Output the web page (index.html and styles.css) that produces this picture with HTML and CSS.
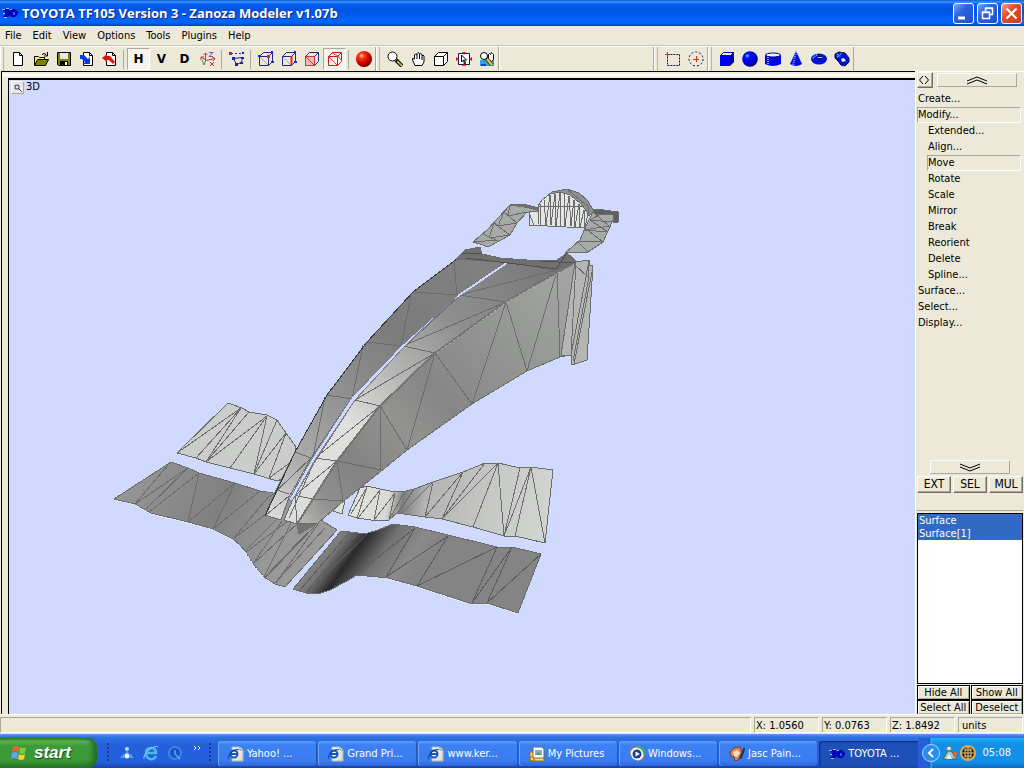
FILE: index.html
```html
<!DOCTYPE html>
<html lang="en">

<head>
    <meta charset="UTF-8">
    <meta name="viewport" content="width=device-width, initial-scale=1.0">
    <title>TOYOTA TF105 Version 3 - Zanoza Modeler v1.07b</title>
    <link rel="stylesheet" href="styles.css">
</head>

<body>
    <!-- Shared icons -->
    <svg class="defs" width="0" height="0" aria-hidden="true">
        <defs>
            <linearGradient id="iePage" x1="0" y1="0" x2="1" y2="1">
                <stop offset="0" stop-color="#fff" />
                <stop offset="1" stop-color="#d8d8c8" />
            </linearGradient>
            <radialGradient id="redBall" cx=".35" cy=".3" r=".75">
                <stop offset="0" stop-color="#fff0a0" />
                <stop offset=".2" stop-color="#f84020" />
                <stop offset=".6" stop-color="#d80000" />
                <stop offset="1" stop-color="#600000" />
            </radialGradient>
            <radialGradient id="blueBall" cx=".33" cy=".3" r=".75">
                <stop offset="0" stop-color="#60f0ff" />
                <stop offset=".2" stop-color="#0010f8" />
                <stop offset=".7" stop-color="#0000d0" />
                <stop offset="1" stop-color="#000050" />
            </radialGradient>
            <symbol id="app" viewBox="0 0 16 16">
                <path d="M1 4h5l2 2 1-2h4l3 3v2l-3 3H9l-1-2-2 2H2l-1-1 3-1-2-2 2-1-3-1z" fill="#0000b8" />
                <path d="M0 4.500h3M4 3.500h3M1 8.500h2M2 12.500h3M8 4.500h2" stroke="#8cc0ff" fill="none" />
                <path d="M11 7h2v3h-2z" fill="#2860ff" />
            </symbol>
            <symbol id="ie" viewBox="0 0 16 16">
                <path d="M4 1h8l3 3v11H4z" fill="url(#iePage)" stroke="#b8b8a8" />
                <path d="M12 1v3h3" fill="#fff" stroke="#88887c" />
                <circle cx="6" cy="8" r="3.500" fill="#fff" stroke="#1258c0" stroke-width="2" />
                <path d="M3 8h7" stroke="#1258c0" stroke-width="2" />
                <path d="M1 13Q-1 10 4 6T11 4" fill="none" stroke="#103c90" />
            </symbol>
            <symbol id="cube" viewBox="0 0 16 16">
                <path d="M1.500 5.500h9v9h-9zM1.500 5.500l4-4h9l-4 4M14.500 1.500v9l-4 4" fill="none" stroke="currentColor" />
            </symbol>
        </defs>
    </svg>

    <!-- Title bar -->
    <header class="titlebar">
        <svg class="icon16"><use href="#app" /></svg>
        <h1>TOYOTA TF105 Version 3 - Zanoza Modeler v1.07b</h1>
        <div class="window-buttons">
            <button aria-label="Minimize"><svg viewBox="0 0 19 19"><path d="M4 14h7" stroke="#fff" stroke-width="3" /></svg></button>
            <button aria-label="Restore"><svg viewBox="0 0 19 19"><path d="M4.500 8.500h7v6h-7zM4 8h8M7.500 7V4.500h7v6H12M7 4h8" fill="none" stroke="#fff" stroke-width="1.500" /></svg></button>
            <button class="close" aria-label="Close"><svg viewBox="0 0 19 19"><path d="M4.500 4.500l10 10M14.500 4.500l-10 10" stroke="#fff" stroke-width="2.200" /></svg></button>
        </div>
    </header>

    <!-- Menu -->
    <nav class="menubar">
        <button>File</button>
        <button>Edit</button>
        <button>View</button>
        <button>Options</button>
        <button>Tools</button>
        <button>Plugins</button>
        <button>Help</button>
    </nav>

    <!-- Toolbars -->
    <div class="toolbars">
        <div class="toolbar">
            <button aria-label="New"><svg viewBox="0 0 16 16"><path d="M3.500 1.500h6l3 3v10h-9zM9.500 1.500v3h3" fill="#fff" stroke="#000" /></svg></button>
            <button aria-label="Open"><svg viewBox="0 0 16 16"><path d="M1.500 14V5.500h4l1 1h5V9" fill="#f4f080" stroke="#000" /><path d="M1.500 14.500l3-6h11l-3 6z" fill="#808000" stroke="#000" /><path d="M9 3.500q2-2 4 0l1 1M14.500 1v4H11" fill="none" stroke="#000" /></svg></button>
            <button aria-label="Save"><svg viewBox="0 0 16 16"><path d="M1.500 1.500h13v13h-12l-1-1z" fill="#808000" stroke="#000" /><path d="M4 2h8v6H4z" fill="#e8e8e0" /><path d="M4 10h8v5H4z" fill="#000" /><path d="M9 11h2v3H9z" fill="#fff" /></svg></button>
            <button aria-label="Import"><svg viewBox="0 0 16 16"><path d="M4.500 1.500h6l3 3v10h-9zM10.500 1.500v3h3" fill="#fff" stroke="#000" /><path d="M1 4h4l4 4 2-2v7H4l2-2-3-3H1z" fill="#0838e8" /></svg></button>
            <button aria-label="Export"><svg viewBox="0 0 16 16"><path d="M4.500 1.500h6l3 3v10h-9zM10.500 1.500v3h3" fill="#fff" stroke="#000" /><path d="M0 7l5-4v2h3l5 6-2 2-4-4H5v2z" fill="#e01010" /></svg></button>
            <span class="sep"></span>
            <button class="letter pressed">H</button>
            <button class="letter">V</button>
            <button class="letter">D</button>
            <button aria-label="Axes"><svg viewBox="0 0 16 16"><path d="M5.500 10V2M3.500 4l2-2 2 2M6 9.500l9-2M12 6l3 1.500-2 2.500M6 9l-5-3M1 9V6h3" fill="none" stroke="#d83030" /><path d="M9 1.500h4l-4 4h4" fill="none" stroke="#8050b0" /><path d="M2 9l2 5 2-5" fill="none" stroke="#38a038" /><path d="M10 11l4 4M14 11l-4 4" stroke="#d83030" /></svg></button>
            <span class="sep"></span>
            <button aria-label="Vertices"><svg viewBox="0 0 16 16"><path d="M2 2.500h12" stroke="#2030d0" stroke-dasharray="2 2" /><path d="M4.500 7.500l3 6 5-2 1-5z" fill="none" stroke="#303060" /><path d="M0 1h3v3H0z" fill="#e01818" /><path d="M13 1h2v2h-2zM12 6h3v2h-3zM6 12h3v3H6zM11 11h3v2h-3zM3 6h3v3H3z" fill="#1820c8" /></svg></button>
            <span class="sep"></span>
            <button aria-label="Vertex level"><svg viewBox="0 0 16 16" color="#202880"><path d="M2 6l8 8" stroke="#aaa" /><use href="#cube" /><path d="M9 4h3v3H9z" fill="#e02020" /><path d="M13 0h2v3h-2zM13 10h3v2h-3zM0 4h2v2H0z" fill="#1828d8" /></svg></button>
            <button aria-label="Edge level"><svg viewBox="0 0 16 16" color="#202880"><path d="M2 6l8 8" stroke="#aaa" /><use href="#cube" /><path d="M10.500 5v9" stroke="#e02020" stroke-width="2" /><path d="M13 0h2v3h-2zM13 10h3v2h-3z" fill="#1828d8" /></svg></button>
            <button aria-label="Face level"><svg viewBox="0 0 16 16" color="#202880"><path d="M1.500 5.500h9v9h-9z" fill="#f0b8b8" /><use href="#cube" /><path d="M1.500 5.500h9v9h-9zM2 6l8 8" fill="none" stroke="#d83030" /></svg></button>
            <button class="pressed" aria-label="Object level"><svg viewBox="0 0 16 16" color="#d81818"><use href="#cube" /><path d="M2 6l8 8M5 2l6 3M11 5l4 5" fill="none" stroke="#e04040" /></svg></button>
            <span class="sep"></span>
            <button aria-label="Material editor"><svg viewBox="0 0 16 16"><circle cx="8" cy="8" r="8" fill="url(#redBall)" /></svg></button>
        </div>
        <div class="toolbar">
            <button aria-label="Zoom"><svg viewBox="0 0 16 16"><path d="M9 9l6 6" stroke="#000" stroke-width="4" /><path d="M10 10l5 5" stroke="#c8b030" stroke-width="2" /><circle cx="5.500" cy="5.500" r="4.500" fill="#fff" stroke="#000" /></svg></button>
            <button aria-label="Pan"><svg viewBox="0 0 16 16"><path d="M5 14.500L2.500 9V7.500L4.500 8V4l1-1 1.500 1V2.500l1-1 1.500 1v1l1-1 1.500 1V5l1-1 1 1v6l-2 3.500zM7 4v4M9.500 3v5M12 5v4" fill="#fff" stroke="#000" /></svg></button>
            <button aria-label="Rotate view"><svg viewBox="0 0 16 16" color="#000"><path d="M1.500 5.500l4-4h9v9l-4 4h-9z" fill="#fff" /><use href="#cube" /></svg></button>
            <button aria-label="Fit view"><svg viewBox="0 0 16 16"><path d="M2.500 2.500h11v11h-11z" fill="#fff" stroke="#181850" /><path d="M6 1h4L8 4zM6 15h4l-2-3zM0 6v4l3-2zM16 6v4l-3-2z" fill="#e01818" /><path d="M5.500 4v7l2-2 1 4 1-1-1-3h2z" fill="#fff" stroke="#000" /></svg></button>
            <button aria-label="View options"><svg viewBox="0 0 16 16"><path d="M1 9h14v6H1z" fill="#30a0e8" /><path d="M2 13h5v2H2z" fill="#1040c0" /><path d="M9.500 8V3.500l1-1 1 1 1-2 1 1 1 1v5l-2 2z" fill="#fff" stroke="#000" /><path d="M7 7l6 7" stroke="#504010" stroke-width="4" /><path d="M8 8l5 6" stroke="#e8d040" stroke-width="2" /><circle cx="5" cy="5" r="3.500" fill="#fff" stroke="#000" /></svg></button>
        </div>
        <div class="toolbar filler"></div>
        <div class="toolbar">
            <button aria-label="Select rectangle"><svg viewBox="0 0 16 16"><path d="M2.500 3.500h12v11h-12z" fill="none" stroke="#101060" stroke-dasharray="2 1" /><path d="M0 3.500h5M2.500 1v5" stroke="#e02020" /></svg></button>
            <button aria-label="Select circle"><svg viewBox="0 0 16 16"><circle cx="8" cy="8" r="7" fill="none" stroke="#101060" stroke-dasharray="2 2" /><path d="M5 8.500h6M8.500 5v6" stroke="#e03010" /></svg></button>
        </div>
        <div class="toolbar">
            <button aria-label="Box"><svg viewBox="0 0 16 16"><path d="M1 5l4-4h10v10l-4 4H1z" fill="#0000b0" /><path d="M1 5h10v10H1z" fill="#0000f0" /><path d="M1.500 4.500l3-3h10l-3 3z" fill="#e8f4ff" stroke="#0000b0" /></svg></button>
            <button aria-label="Sphere"><svg viewBox="0 0 16 16"><circle cx="8" cy="8" r="7.800" fill="url(#blueBall)" /></svg></button>
            <button aria-label="Cylinder"><svg viewBox="0 0 16 16"><path d="M0 4v9q8 4 16 0V4z" fill="#0008e0" /><path d="M3 6v7" stroke="#58b8ff" stroke-width="2" stroke-dasharray="1 1" /><ellipse cx="8" cy="4" rx="7.500" ry="2" fill="#e8f8ff" stroke="#000080" /></svg></button>
            <button aria-label="Cone"><svg viewBox="0 0 16 16"><path d="M8 0l6 13q-6 4-12 0z" fill="#0008e0" /><path d="M8 1L5 14" stroke="#50b0ff" stroke-width="2" stroke-dasharray="1 1" /></svg></button>
            <button aria-label="Torus"><svg viewBox="0 0 16 16"><ellipse cx="8" cy="8" rx="8" ry="5.500" fill="#0010d8" /><ellipse cx="9" cy="6.500" rx="3" ry="1" fill="#d8f0ff" stroke="#000070" /><path d="M2 7q2-3 5-3" fill="none" stroke="#50c0ff" stroke-width="2" stroke-dasharray="1 1" /></svg></button>
            <button aria-label="Tube"><svg viewBox="0 0 16 16"><path d="M1 3l4-2 6 1 4 5v4l-4 4-4-1-3-4-3-3z" fill="#0010c8" stroke="#000070" /><path d="M7 8l3-1 2 3-4 1z" fill="#d8f0ff" /><path d="M3 6l5-4M3 3l3 3" stroke="#50b0ff" stroke-width="2" stroke-dasharray="1 1" /></svg></button>
        </div>
    </div>

    <!-- Work area -->
    <main class="workspace">
        <section class="viewport-frame">
            <div class="viewport">
                <div class="viewport-label">
                    <button aria-label="Maximize view"><svg viewBox="0 0 12 12"><path d="M3.500 3.500h4v4h-4zM7.500 7.500l3 3" fill="none" stroke="#202090" /></svg></button>
                    <span>3D</span>
                </div>
                <svg class="scene" viewBox="9 80 906 634" preserveAspectRatio="xMinYMin slice" role="img" aria-label="Car model">
                    <defs>
                        <linearGradient id="wingLeft" gradientUnits="userSpaceOnUse" x1="130" y1="470" x2="320" y2="570">
                            <stop offset="0" stop-color="#969696" />
                            <stop offset=".45" stop-color="#808080" />
                            <stop offset=".75" stop-color="#979797" />
                            <stop offset="1" stop-color="#9c9c9c" />
                        </linearGradient>
                        <linearGradient id="wingRight" gradientUnits="userSpaceOnUse" x1="318" y1="545" x2="395" y2="600">
                            <stop offset="0" stop-color="#8c8c8c" />
                            <stop offset=".18" stop-color="#777" />
                            <stop offset=".36" stop-color="#2a2a2a" />
                            <stop offset=".6" stop-color="#727272" />
                            <stop offset=".85" stop-color="#8a8a8a" />
                            <stop offset="1" stop-color="#848484" />
                        </linearGradient>
                        <linearGradient id="flapRight" gradientUnits="userSpaceOnUse" x1="350" y1="490" x2="545" y2="530">
                            <stop offset="0" stop-color="#e4e4e0" />
                            <stop offset=".2" stop-color="#d8d8d4" />
                            <stop offset=".27" stop-color="#7e7e7c" />
                            <stop offset=".38" stop-color="#b4b4b2" />
                            <stop offset=".7" stop-color="#c6c8c6" />
                            <stop offset="1" stop-color="#d2d4d2" />
                        </linearGradient>
                        <linearGradient id="noseLeft" gradientUnits="userSpaceOnUse" x1="480" y1="250" x2="275" y2="520">
                            <stop offset="0" stop-color="#808080" />
                            <stop offset=".35" stop-color="#7c7c7c" />
                            <stop offset=".6" stop-color="#929292" />
                            <stop offset=".82" stop-color="#acacaa" />
                            <stop offset="1" stop-color="#dcdcda" />
                        </linearGradient>
                        <linearGradient id="noseTop" gradientUnits="userSpaceOnUse" x1="550" y1="265" x2="290" y2="520">
                            <stop offset="0" stop-color="#787878" />
                            <stop offset=".3" stop-color="#8f8f8f" />
                            <stop offset=".52" stop-color="#b8b8b6" />
                            <stop offset=".7" stop-color="#e0e0de" />
                            <stop offset="1" stop-color="#dcdcda" />
                        </linearGradient>
                        <linearGradient id="noseSide" gradientUnits="userSpaceOnUse" x1="570" y1="290" x2="305" y2="520">
                            <stop offset="0" stop-color="#a2a4a2" />
                            <stop offset=".25" stop-color="#939593" />
                            <stop offset=".48" stop-color="#868686" />
                            <stop offset=".62" stop-color="#929290" />
                            <stop offset=".8" stop-color="#828282" />
                            <stop offset=".92" stop-color="#909090" />
                            <stop offset="1" stop-color="#b0b0ae" />
                        </linearGradient>
                    </defs>
                    <g stroke="#6c6c6c" stroke-linejoin="round">
                        <!-- Front wing, left flap -->
                        <path fill="#cbcdcb" d="M228 403L242 408 249 412 267 415 277 420 286 433 296 447 292 475 277 481 254 474 230 468 206 462 196 458 177 453Z" />
                        <path fill="none" d="M241 408L177 453M241 408L196 458M241 408L206 462M249 412L206 462M267 416L206 462M267 416L230 468M267 416L254 474M277 420L254 474M286 433L254 474M286 433L269 478M294 460L269 478" />
                        <!-- Front wing, left plane -->
                        <path fill="url(#wingLeft)" d="M171 462L188 468 199 473 235 483 260 491 280 494 337 530 285 587 275 584 264 577 253 564 246 552 240 545 233 539 213 529 188 522 151 513 135 504 114 499Z" />
                        <path fill="none" d="M168 465L135 504M188 468L135 504M188 468L145 510M199 473L149 512M199 473L188 522M235 483L188 522M235 483L213 529M260 491L213 529M270 495L233 539M265 515L233 539M277 519L246 550M288 521L246 552M282 521L253 564M297 524L253 564M292 521L264 577M308 532L265 577M315 526L266 577M325 528L275 583M318 524L276 583" />
                        <!-- Front wing, right flap -->
                        <path fill="#dededb" d="M333 511L342 514 345 500 352 492Z" />
                        <path fill="url(#flapRight)" d="M360 488L367 486 380 489 395 492 406 491 414 489 433 482 463 472 485 463 498 463 520 468 531 467 553 470 545 543 515 536 504 536 473 527 442 519 425 517 397 513 389 520 371 520 357 518 348 515Z" />
                        <path fill="none" d="M367 487L351 514M367 487L357 518M380 490L358 518M380 490L374 520M395 493L374 520M395 493L389 520M405 491L389 520M414 489L398 513M433 482L402 513M433 482L425 517M463 472L425 517M463 472L442 519M485 463L442 519M498 463L442 519M498 463L473 527M498 463L504 536M520 468L504 536M531 467L504 536M531 467L515 536M531 467L545 543" />
                        <!-- Front wing, right plane -->
                        <path fill="url(#wingRight)" d="M341 531L358 533 368 533 378 530 393 524 415 527 448 535 497 547 512 547 541 554 518 613 487 603 472 604 417 586 388 578 357 575 345 582 330 590 318 594 306 593 293 589Z" />
                        <path fill="none" stroke="#5c5c5c" d="M350 532L300 590M358 533L306 592M368 533L308 592M415 528L357 574M415 528L386 577M448 536L386 577M448 536L417 586M497 547L417 586M497 547L472 603M512 547L472 603M512 547L487 603M541 554L487 603" />
                        <path fill="none" stroke="#e4eaff" stroke-dasharray="2 1" d="M114 500L135 505 151 514 188 523 213 530 233 540M246 553L253 565 264 578 275 585M388 579L417 587 472 605 487 604 518 614" />
                        <!-- Nose, side wall -->
                        <path fill="url(#noseSide)" d="M575 263L506 302 435 353 380 406 337 461 313 499 297 524 318 523 340 504 380 472 407 450 472 404 527 371 560 357 570 355Z" />
                        <path fill="none" d="M557 271L560 357M557 271L527 371M506 302L527 371M506 302L472 404M435 353L472 404M435 353L407 450M380 406L407 450M380 406L381 470M337 461L381 470M337 461L343 500M313 499L343 501M575 263L561 355" />
                        <!-- Nose, left half -->
                        <path fill="url(#noseLeft)" d="M457 259L508 261 458 295 401 346 352 397 310 460 289 497 281 520 265 515 277 488 295 452 327 395 367 342 413 292Z" />
                        <path fill="none" d="M413 292L458 295M367 342L401 346M327 395L352 399M295 452L311 458M277 490L289 494M454 262L457 295M411 295L401 346M363 345L352 399M325 397L313 457M311 458L270 497M289 496L266 515" />
                        <!-- Nose, right half -->
                        <path fill="url(#noseTop)" d="M509 261L548 262 575 263 506 302 435 353 380 406 337 461 313 499 297 524 284 520 293 499 316 460 355 400 404 347 459 296Z" />
                        <path fill="none" d="M459 295L506 302M403 346L435 353M355 400L380 406M315 458L337 461M293 495L313 499M503 260L557 271M557 270L459 295M506 302L403 346M435 353L355 400M380 406L315 458M337 461L293 497M316 458L289 518M295 496L297 524" />
                        <path fill="none" stroke="#d0daff" stroke-width="2" d="M508 262L458 296" />
                        <path fill="#d0daff" stroke="#7c8090" d="M458 295L401 346 352 397 311 460 289 500 292 501 315 460 355 400 404 347Z" />
                        <path fill="none" stroke="#747472" stroke-width="2" d="M575 262L507 301 435 353 380 406 337 461 313 499 297 524" />
                        <path fill="none" stroke="#aaa" stroke-dasharray="2 3" d="M560 272L507 302 437 353" />
                        <path fill="none" stroke="#383838" d="M457 259L413 292 367 342 327 395 295 452 265 516" />
                        <path fill="#747474" d="M297 524L318 523 299 534Z" />
                        <!-- Side deflector -->
                        <path fill="#b4b6b4" d="M575 262L589 260 589 265 593 266 587 360 572 365 571 355 561 356Z" />
                        <path fill="none" d="M576 262L571 355M589 261L571 355M593 267L574 364M589 277L573 361M575 265L588 277M588 261V277" />
                        <!-- Cockpit rim -->
                        <path fill="#707070" d="M456 259L465 250 480 247 482 254 500 258 540 261 557 260 567 253 576 261 557 270 530 264Z" />
                        <path fill="none" stroke="#505050" d="M462 253L482 254M466 258L557 269M566 254L557 268M540 261L575 263" />
                        <!-- Mirror arms -->
                        <path fill="#a8aaa8" d="M473 242L487 230 510 205 522 205 538 209 537 213 527 212 517 223 510 235 488 247 480 244Z" />
                        <path fill="none" d="M504 212L517 223M494 223L510 235M483 234L498 241M510 205L508 216 527 212M504 212L498 226 517 223M494 223L489 238 510 235M473 242L498 240" />
                        <path fill="#707070" d="M510 205L523 204 539 208 538 210 524 207Z" />
                        <path fill="#a8aaa8" d="M593 212L617 213 612 222 603 242 588 252 565 253 580 240 585 228Z" />
                        <path fill="none" d="M590 220L612 222M584 230L608 232M577 241L603 242M593 212L609 226 584 230M585 228L603 242 577 241 588 252M603 213L590 220 608 232" />
                        <path fill="#606060" d="M590 211L597 209 618 212 618 222 613 223 613 215 596 214Z" />
                        <!-- Air intake -->
                        <path fill="#909090" d="M545 198L552 192 567 189 579 193 588 201 594 212 588 216 578 204 568 194Z" />
                        <path fill="#e4e6e3" d="M529 211L538 212 538 206 542 200 550 194 560 192 570 195 580 203 588 213 585 228 529 225Z" />
                        <path fill="none" d="M538 206L584 207M529 213L534 225M538 209V224M540 204L540 225M544 200L546 225 550 195 551 225 555 194 556 226 560 193 560 226M564 193L565 226 569 196 571 226 574 200 575 227 579 204 580 227 584 210 585 228M567 189L580 200 589 207 588 214" />
                    </g>
                </svg>
            </div>
        </section>

        <!-- Command panel -->
        <aside class="panel">
            <div class="panel-top">
                <button class="raised swap" aria-label="Swap side"><svg viewBox="0 0 12 12"><path d="M5 2L1.500 6 5 10M7 2l3.500 4L7 10" fill="none" stroke="#000" /></svg></button>
                <button class="scroll" aria-label="Scroll up"><svg viewBox="0 0 22 9"><path d="M1 5l10-4 10 4M1 8l10-4 10 4" fill="none" stroke="#000" /></svg></button>
            </div>
            <ul class="commands">
                <li><button>Create...</button></li>
                <li><button class="open">Modify...</button>
                    <ul>
                        <li><button>Extended...</button></li>
                        <li><button>Align...</button></li>
                        <li><button class="open">Move</button></li>
                        <li><button>Rotate</button></li>
                        <li><button>Scale</button></li>
                        <li><button>Mirror</button></li>
                        <li><button>Break</button></li>
                        <li><button>Reorient</button></li>
                        <li><button>Delete</button></li>
                        <li><button>Spline...</button></li>
                    </ul>
                </li>
                <li><button>Surface...</button></li>
                <li><button>Select...</button></li>
                <li><button>Display...</button></li>
            </ul>
            <button class="scroll down" aria-label="Scroll down"><svg viewBox="0 0 22 9"><path d="M1 1l10 4 10-4M1 4l10 4 10-4" fill="none" stroke="#000" /></svg></button>
            <div class="modes">
                <button class="raised">EXT</button>
                <button class="raised">SEL</button>
                <button class="raised">MUL</button>
            </div>
            <div class="objects">
                <select multiple aria-label="Objects">
                    <option selected>Surface</option>
                    <option selected>Surface[1]</option>
                </select>
                <div class="object-buttons">
                    <button>Hide All</button>
                    <button>Show All</button>
                    <button>Select All</button>
                    <button>Deselect</button>
                </div>
            </div>
        </aside>
    </main>

    <!-- Status bar -->
    <footer class="statusbar">
        <span class="message"></span>
        <span>X: 1.0560</span>
        <span>Y: 0.0763</span>
        <span>Z: 1.8492</span>
        <span class="units">units</span>
    </footer>

    <!-- Windows taskbar -->
    <div class="taskbar">
        <button class="start">
            <svg viewBox="0 0 18 18"><path d="M3 3q3-2 6 0L8 8Q5 6 2 8z" fill="#f06030" /><path d="M10 3q3 2 6 0l-1 6q-3 2-6 0z" fill="#80c840" /><path d="M2 9q3-2 6 0l-1 6q-3-2-6 0z" fill="#68a0f8" /><path d="M9 10q3 2 6 0l-1 5q-3 2-6 0z" fill="#f8d030" /></svg>
            start
        </button>
        <div class="quick">
            <span class="grip"></span>
            <button aria-label="Messenger"><svg viewBox="0 0 16 16"><circle cx="8" cy="4" r="2" fill="#b8e0f8" /><path d="M8 5l3 6H5zM5 8l-4 5h4M11 8l4 5h-4" fill="#50a0e0" /><circle cx="8" cy="11" r="2.500" fill="#e8f8ff" /></svg></button>
            <button aria-label="Internet Explorer"><svg viewBox="0 0 16 16"><path d="M13 11q-2 4-6 3t-4-6 5-5 5 5H4" fill="none" stroke="#50b8f0" stroke-width="2.500" /><path d="M1 14Q0 10 6 5t9-3" fill="none" stroke="#80d0f8" /></svg></button>
            <button aria-label="QuickTime"><svg viewBox="0 0 16 16"><circle cx="8" cy="8" r="6" fill="#1850c8" stroke="#3c88e0" stroke-width="2" /><path d="M8 5v4l5 5" fill="none" stroke="#58a8f0" stroke-width="1.500" /></svg></button>
            <button class="more" aria-label="More"><svg viewBox="0 0 8 6"><path d="M1 1l2 2-2 2M5 1l2 2-2 2" fill="none" stroke="#fff" /></svg></button>
            <span class="grip"></span>
        </div>
        <div class="tasks">
            <button><svg class="icon16"><use href="#ie" /></svg>Yahoo! ...</button>
            <button><svg class="icon16"><use href="#ie" /></svg>Grand Pri...</button>
            <button><svg class="icon16"><use href="#ie" /></svg>www.ker...</button>
            <button><svg class="icon16" viewBox="0 0 16 16"><path d="M1 6h4v9H1zM1 11h14v4H1z" fill="#f8d860" stroke="#a07010" /><path d="M4 1h9l2 2v9H4z" fill="#fff" stroke="#806850" /><path d="M6 4h7v5H6z" fill="#78b0e8" /><path d="M6 9l3-3 4 3z" fill="#60a050" /></svg>My Pictures</button>
            <button><svg class="icon16" viewBox="0 0 16 16"><circle cx="8" cy="8" r="7" fill="#fff" stroke="#e87830" /><path d="M8 1a7 7 0 0 1 7 7" stroke="#50b050" stroke-width="2" fill="none" /><path d="M1 8a7 7 0 0 0 7 7" stroke="#4080e0" stroke-width="2" fill="none" /><circle cx="8" cy="8" r="4.500" fill="#1c3c90" /><path d="M6.500 5.500v5L11 8z" fill="#fff" /></svg>Windows...</button>
            <button><svg class="icon16" viewBox="0 0 16 16"><path d="M1 6l4-4 6-1 2 5-4 8-3 1-1-4-3-1z" fill="#e08850" stroke="#803818" /><path d="M4 6l4-2 3 3-3 4-3-1z" fill="#f8e0c0" /><path d="M15.500 2l-4 11" stroke="#203060" stroke-width="2" /></svg>Jasc Pain...</button>
            <button class="current"><svg class="icon16"><use href="#app" /></svg>TOYOTA ...</button>
        </div>
        <div class="tray">
            <button class="chevron" aria-label="Show hidden icons"><svg viewBox="0 0 18 18"><circle cx="9" cy="9" r="8.500" fill="#2a8cf0" stroke="#a8d8ff" /><path d="M11 5L7 9l4 4" fill="none" stroke="#fff" stroke-width="2" /></svg></button>
            <svg class="icon16" viewBox="0 0 16 16"><circle cx="7" cy="3.500" r="2.500" fill="#d8e4d8" stroke="#607070" /><path d="M1 14l3-5 2-3h3l3 4 3 4z" fill="#a8c8c0" stroke="#406068" /><path d="M4 14l3-5 3 5z" fill="#e8f4e8" /><path d="M12 7h3l-1 5h-3z" fill="#e86820" /></svg>
            <svg class="icon16" viewBox="0 0 16 16"><circle cx="8" cy="8" r="7" fill="#181818" stroke="#e0a850" stroke-width="2" /><path d="M2 8h12M8 2v12M4 5h8M4 11h8" stroke="#f0c070" /><ellipse cx="8" cy="8" rx="3" ry="6" fill="none" stroke="#f0c070" /></svg>
            <time>05:08</time>
        </div>
    </div>
</body>

</html>
```
FILE: styles.css
```css
/* General styling */
* {
    box-sizing: border-box;
}

body {
    margin: 0;
    height: 100vh;
    display: flex;
    flex-direction: column;
    overflow: hidden;
    background-color: #ece9d8;
    color: #000;
    font-family: "DejaVu Sans Condensed", "Liberation Sans", sans-serif;
    font-size: 11px;
    line-height: 16px;
}

button {
    margin: 0;
    padding: 0;
    border: none;
    background: none;
    color: inherit;
    font: inherit;
    white-space: nowrap;
}

ul {
    list-style: none;
    margin: 0;
    padding: 0;
}

svg {
    display: block;
    flex: none;
}

.defs {
    position: absolute;
}

.icon16 {
    width: 16px;
    height: 16px;
}

/* Title bar */
.titlebar {
    flex: none;
    height: 26px;
    display: flex;
    align-items: center;
    gap: 4px;
    padding: 0 2px;
    background: linear-gradient(#0a56d8 0, #3d95ff 2px, #0660f0 4px, #0054e0 9px, #0058ec 14px, #0066ff 20px, #0060f8 23px, #0040c0 26px);
}

.titlebar h1 {
    flex: 1;
    margin: 0;
    color: #fff;
    font-family: "Open Sans", "Noto Sans", sans-serif;
    font-size: 13px;
    font-weight: bold;
    white-space: nowrap;
    text-shadow: 1px 1px 0 #0a2a80;
}

.window-buttons {
    display: flex;
    gap: 3px;
}

.window-buttons button {
    width: 21px;
    height: 21px;
    border: 1px solid #fff;
    border-radius: 3px;
    background: linear-gradient(135deg, #7aa4f4, #2c62e0 40%, #1c50d0);
}

.window-buttons .close {
    background: linear-gradient(135deg, #f0a088, #e05030 40%, #c83c18);
}

/* Menu */
.menubar {
    flex: none;
    height: 20px;
    display: flex;
    align-items: center;
    gap: 11px;
    padding: 0 5px;
    border-bottom: 1px solid #c9c5b2;
}

/* Toolbars */
.toolbars {
    flex: none;
    height: 25px;
    display: flex;
    border-top: 1px solid #fff;
}

.toolbar {
    display: flex;
    align-items: center;
    padding-left: 6px;
    border-right: 1px solid #aca899;
    border-left: 1px solid #fff;
    box-shadow: inset 2px 0 0 #ece9d8, inset 3px 0 0 #bab6a4;
}

.toolbar:first-child {
    padding-left: 5px;
}

.toolbar.filler {
    width: 155px;
    box-shadow: none;
}

.toolbar button {
    width: 23px;
    height: 22px;
    display: flex;
    align-items: center;
    justify-content: center;
}

.toolbar svg {
    width: 16px;
    height: 16px;
}

.toolbar .letter {
    font-family: "DejaVu Sans", sans-serif;
    font-size: 12px;
    font-weight: bold;
}

.toolbar .pressed {
    border: 1px solid;
    border-color: #aca899 #fff #fff #aca899;
    background-color: #f6f4ec;
}

.sep {
    width: 1px;
    height: 19px;
    margin: 0 3px 0 2px;
    background-color: #aca899;
}

/* Work area */
.workspace {
    flex: 1;
    min-height: 0;
    display: flex;
}

.viewport-frame {
    flex: 1;
    min-width: 0;
    padding: 6px 0 0 6px;
    margin-left: 1px;
    border-top: 1px solid #000;
    border-left: 1px solid #000;
    background: linear-gradient(#ece9d8, #fff 3px, #ece9d8 6px);
}

.viewport {
    position: relative;
    height: 100%;
    border-top: 2px solid #000;
    border-left: 1px solid #000;
    background-color: #d0daff;
    overflow: hidden;
}

.viewport-label {
    position: absolute;
    top: 0;
    left: 2px;
    display: flex;
    align-items: center;
    gap: 2px;
    line-height: 14px;
}

.viewport-label button {
    width: 13px;
    height: 13px;
    border: 1px solid;
    border-color: #fff #aca899 #aca899 #fff;
    background-color: #ece9d8;
}

.scene {
    width: 100%;
    height: 100%;
    shape-rendering: crispEdges;
}

/* Command panel */
.panel {
    width: 109px;
    display: flex;
    flex-direction: column;
    padding: 0 1px;
    border-top: 1px solid #fff;
    border-left: 1px solid #fff;
}

.raised {
    border: 1px solid;
    border-color: #fff #716f64 #716f64 #fff;
    box-shadow: inset -1px -1px 0 #aca899;
}

.panel-top {
    display: flex;
    align-items: center;
    gap: 4px;
    margin-bottom: 3px;
}

.swap {
    width: 16px;
    height: 16px;
}

.swap svg {
    width: 12px;
    height: 12px;
}

.scroll {
    width: 80px;
    height: 14px;
    display: flex;
    align-items: center;
    justify-content: center;
    border: 1px solid;
    border-color: #fff #aca899 #aca899 #fff;
}

.scroll svg {
    width: 22px;
    height: 9px;
}

.scroll.down {
    align-self: center;
}

.commands {
    flex: 1;
    margin-right: 2px;
}

.commands ul {
    margin-left: 10px;
}

.commands button {
    display: block;
    width: 100%;
    height: 16px;
    border: 1px solid transparent;
    line-height: 14px;
    text-align: left;
}

.commands .open {
    border-color: #aca899 #fff #fff #aca899;
}

.modes {
    display: flex;
    gap: 2px;
    margin: 2px 0 17px;
}

.modes button {
    flex: 1;
    height: 17px;
    font-size: 12px;
    line-height: 15px;
}

.objects {
    display: flex;
    flex-direction: column;
    flex: none;
    height: 204px;
    padding-top: 2px;
    border-top: 1px solid #aca899;
    overflow: hidden;
}

.objects select {
    flex: none;
    width: 100%;
    height: 171px;
    margin: 0;
    padding: 0;
    border: 1px solid #000;
    border-radius: 0;
    outline: none;
    background-color: #fff;
    font: inherit;
    overflow: hidden;
}

.objects option {
    min-height: 13px;
    padding: 0 1px;
    line-height: 13px;
}

.objects option:checked {
    color: #fff;
    background: linear-gradient(#316ac5, #316ac5);
}

.object-buttons {
    display: grid;
    grid-template-columns: 1fr 1fr;
    gap: 0 1px;
    padding-top: 1px;
}

.object-buttons button {
    height: 15px;
    border: 1px solid #000;
    box-shadow: inset 1px 1px 0 #fff, inset -1px -1px 0 #aca899;
    line-height: 13px;
}

/* Status bar */
.statusbar {
    flex: none;
    height: 20px;
    display: flex;
    gap: 3px;
    padding: 2px 1px 1px 0;
    border-top: 1px solid #fff;
}

.statusbar span {
    width: 65px;
    padding-left: 1px;
    border: 1px solid;
    border-color: #aca899 #fff #fff #aca899;
}

.statusbar .message {
    flex: 1;
}

.statusbar .units {
    padding-left: 3px;
}

/* Taskbar */
.taskbar {
    flex: none;
    height: 34px;
    display: flex;
    padding-top: 4px;
    color: #fff;
    background: linear-gradient(#5c9cf0 0, #2f72e4 3px, #2b6be0 6px, #245edb 12px, #2460de 28px, #1941a5 34px);
}

.start {
    width: 97px;
    display: flex;
    align-items: center;
    gap: 6px;
    padding-left: 10px;
    border-radius: 0 9px 9px 0;
    background: linear-gradient(#2f7a2c 0, #62b45c 3px, #3c9a38 8px, #3a9a36 22px, #2a7428 30px);
    box-shadow: inset -4px 0 5px #256b24;
    font-family: "Liberation Sans", sans-serif;
    font-size: 17px;
    font-weight: bold;
    font-style: italic;
    text-shadow: 1px 1px 1px #1c4c1c;
}

.start svg {
    width: 18px;
    height: 18px;
}

.quick {
    width: 121px;
    display: flex;
    align-items: center;
    gap: 8px;
    padding: 0 6px 0 10px;
}

.quick svg {
    width: 16px;
    height: 16px;
}

.quick .more {
    align-self: flex-start;
    margin: 7px 0 0 2px;
}

.quick .more svg {
    width: 8px;
    height: 6px;
}

.grip {
    width: 4px;
    height: 20px;
    background: radial-gradient(circle at 1px 1px, #123c98 1px, transparent 1px) 0 0 / 4px 4px;
}

.tasks {
    flex: 1;
    min-width: 0;
    display: flex;
    gap: 1px;
    padding: 3px 0 2px;
}

.tasks button {
    flex: 1;
    min-width: 0;
    max-width: 160px;
    display: flex;
    align-items: center;
    gap: 3px;
    padding-left: 10px;
    border-radius: 3px;
    background: linear-gradient(#5f9cfc, #3c81f3 4px, #3a7cf0 20px, #2c66d8);
    box-shadow: inset 1px 0 0 #69a2fb, inset -1px 0 0 #2858c0;
}

.tasks .current {
    background: #1e50b8;
    box-shadow: inset 1px 1px 2px #0c2c78;
}

.tray {
    display: flex;
    align-items: center;
    gap: 2px;
    padding: 0 13px 0 4px;
    background: linear-gradient(90deg, #245edb 11px, #0c3c9c 11px, #30b0f0 13px, transparent 15px), linear-gradient(#18b4f0, #1290e8 5px, #1290e8 24px, #0c68c0);
}

.chevron svg {
    width: 18px;
    height: 18px;
}

.tray time {
    margin-left: 4px;
}
```
